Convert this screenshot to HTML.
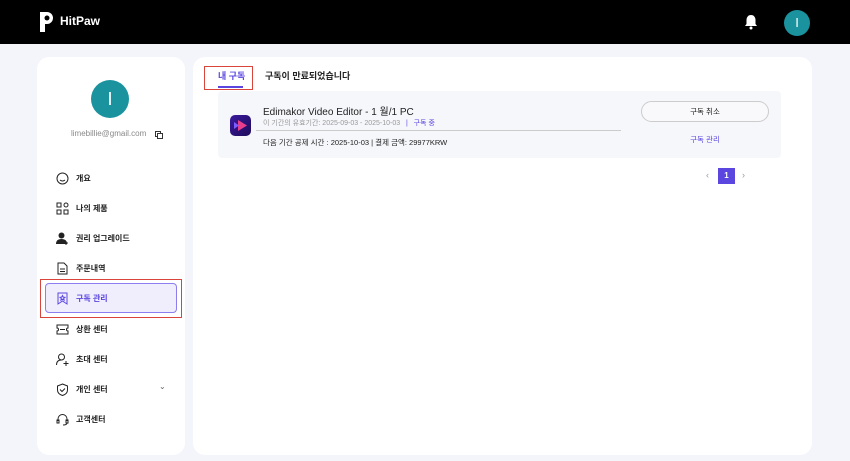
<!DOCTYPE html>
<html><head><meta charset="utf-8"><style>
*{margin:0;padding:0;box-sizing:border-box}
body{width:850px;height:461px;background:#f4f4fb;font-family:"Liberation Sans","Noto Sans CJK KR",sans-serif;position:relative;overflow:hidden;color:#222}
.a{position:absolute}
.hdr{left:0;top:0;width:850px;height:44px;background:#000}
.card{background:#fff;border-radius:12px}
.mi{position:absolute;left:56px;font-size:8px;color:#222;display:flex;align-items:center;gap:7px;height:14px;font-weight:bold}
.mi svg{width:13px;height:13px}
</style></head><body>
<div class="a hdr"></div>
<svg class="a" style="left:38px;top:11px" width="18" height="22" viewBox="0 0 18 22"><path d="M2 1h7a6 6 0 0 1 0 12H7v8H2z" fill="#fff"/><circle cx="9" cy="7" r="2.5" fill="#000"/></svg>
<div class="a" style="left:60px;top:14px;color:#fff;font-weight:bold;font-size:12px">HitPaw</div>
<svg class="a" style="left:744px;top:14px" width="14" height="16" viewBox="0 0 14 16"><path d="M7 1c3 0 4.5 2.5 4.5 5v4l1.5 2H1l1.5-2V6C2.5 3.5 4 1 7 1z" fill="#fff"/><circle cx="7" cy="14" r="1.5" fill="#fff"/></svg>
<div class="a" style="left:784px;top:10px;width:26px;height:26px;border-radius:50%;background:#1a939f;color:#fff;font-size:13px;text-align:center;line-height:26px">I</div>

<div class="a card" style="left:37px;top:57px;width:148px;height:398px"></div>
<div class="a card" style="left:193px;top:57px;width:619px;height:398px"></div>

<div class="a" style="left:91px;top:80px;width:38px;height:38px;border-radius:50%;background:#1a939f;color:#fff;font-size:18px;text-align:center;line-height:38px">I</div>
<div class="a" style="left:71px;top:129px;font-size:8px;color:#888">limebillie@gmail.com</div>
<svg class="a" style="left:155px;top:131px" width="8" height="8" viewBox="0 0 8 8"><rect x="0.5" y="0.5" width="5" height="5" fill="none" stroke="#333"/><rect x="2.5" y="2.5" width="5" height="5" fill="#fff" stroke="#333"/></svg>

<div class="a" style="left:40px;top:279px;width:142px;height:39px;border:1.5px solid #d9443b"></div>
<div class="a" style="left:45px;top:283px;width:132px;height:30px;background:#f0eefc;border:1px solid #8b7ef0;border-radius:4px"></div>

<div class="mi" style="top:171px"><svg viewBox="0 0 13 13"><circle cx="6.5" cy="6.5" r="5.5" fill="none" stroke="#222"/><path d="M4 8q2.5 2 5 0" fill="none" stroke="#222"/></svg>개요</div>
<div class="mi" style="top:201px"><svg viewBox="0 0 13 13" fill="none" stroke="#222"><rect x="1" y="1" width="4" height="4"/><rect x="1" y="8" width="4" height="4"/><rect x="8" y="8" width="4" height="4"/><circle cx="10" cy="3" r="2"/></svg>나의 제품</div>
<div class="mi" style="top:231px"><svg viewBox="0 0 13 13"><circle cx="5.5" cy="3.5" r="3" fill="#222"/><path d="M0 12q0-5 5.5-5t5.5 5z" fill="#222"/><path d="M10 9v4M8 11h4" stroke="#222"/></svg>권리 업그레이드</div>
<div class="mi" style="top:261px"><svg viewBox="0 0 13 13" fill="none" stroke="#222"><path d="M2 1h6l3 3v8H2z"/><path d="M4 7h5M4 9.5h5"/></svg>주문내역</div>
<div class="mi" style="top:291px;color:#5b47e0"><svg viewBox="0 0 13 13" fill="none" stroke="#5b47e0"><path d="M2 1h9v11l-4.5-3L2 12z"/><path d="M6.5 3.5l.8 1.6 1.7.2-1.3 1.1.4 1.7-1.6-.9-1.6.9.4-1.7L4 5.3l1.7-.2z"/></svg>구독 관리</div>
<div class="mi" style="top:322px"><svg viewBox="0 0 13 13" fill="none" stroke="#222"><path d="M1 2h11v3a1.5 1.5 0 0 0 0 3v3H1V8a1.5 1.5 0 0 0 0-3z"/><path d="M4 6.5h5"/></svg>상환 센터</div>
<div class="mi" style="top:352px"><svg viewBox="0 0 13 13" fill="none" stroke="#222"><circle cx="5.5" cy="4" r="3"/><path d="M0.5 12q0-5 5-5"/><path d="M10 8v5M7.5 10.5h5"/></svg>초대 센터</div>
<div class="mi" style="top:382px"><svg viewBox="0 0 13 13" fill="none" stroke="#222"><path d="M6.5 1l5 2v4q0 4-5 5.5Q1.5 11 1.5 7V3z"/><path d="M4 6.5l2 2 3-3"/></svg>개인 센터</div>
<div class="a" style="left:159px;top:382px;font-size:8px;color:#666">⌄</div>
<div class="mi" style="top:412px"><svg viewBox="0 0 13 13" fill="none" stroke="#222"><path d="M2 8V6a4.5 4.5 0 0 1 9 0v2"/><rect x="1" y="7" width="2" height="3"/><rect x="10" y="7" width="2" height="3"/><path d="M11 10q0 2-4 2"/></svg>고객센터</div>

<div class="a" style="left:204px;top:66px;width:49px;height:24px;border:1.5px solid #d9443b"></div>
<div class="a" style="left:218px;top:69px;font-size:9px;color:#5b47e0;font-weight:bold">내 구독</div>
<div class="a" style="left:218px;top:86px;width:25px;height:2px;background:#5b47e0"></div>
<div class="a" style="left:265px;top:69px;font-size:9px;font-weight:bold">구독이 만료되었습니다</div>

<div class="a" style="left:218px;top:91px;width:563px;height:67px;background:#f6f7fb;border-radius:4px"></div>
<div class="a" style="left:230px;top:115px;width:21px;height:21px;border-radius:5px;background:linear-gradient(135deg,#3b1a9e,#1e0c5a)"></div>
<svg class="a" style="left:233px;top:119px" width="15" height="13" viewBox="0 0 15 13"><path d="M5 1l9 5.5L5 12z" fill="#e83e8c"/><path d="M1 3l5 3.5L1 10z" fill="#7b5cff"/></svg>
<div class="a" style="left:263px;top:103px;font-size:10px">Edimakor Video Editor - 1 월/1 PC</div>
<div class="a" style="left:263px;top:118px;font-size:7px;color:#999">이 기간의 유효기간: 2025-09-03 - 2025-10-03 &nbsp;&nbsp;<span style="color:#5b47e0">| &nbsp;&nbsp;구독 중</span></div>
<div class="a" style="left:256px;top:130px;width:365px;height:1px;background:#ccc"></div>
<div class="a" style="left:263px;top:137px;font-size:7.5px">다음 기간 공제 시간 : 2025-10-03 | 결제 금액: 29977KRW</div>
<div class="a" style="left:641px;top:101px;width:128px;height:21px;border:1px solid #ccc;border-radius:11px;font-size:7.5px;text-align:center;line-height:19px;background:#f9f9fb">구독 취소</div>
<div class="a" style="left:641px;top:134px;width:128px;font-size:7.5px;text-align:center;color:#5b47e0">구독 관리</div>

<div class="a" style="left:706px;top:170px;font-size:9px;color:#999">‹</div>
<div class="a" style="left:718px;top:168px;width:17px;height:16px;background:#5b47e0;color:#fff;font-size:8px;font-weight:bold;text-align:center;line-height:16px">1</div>
<div class="a" style="left:742px;top:170px;font-size:9px;color:#999">›</div>
</body></html>
